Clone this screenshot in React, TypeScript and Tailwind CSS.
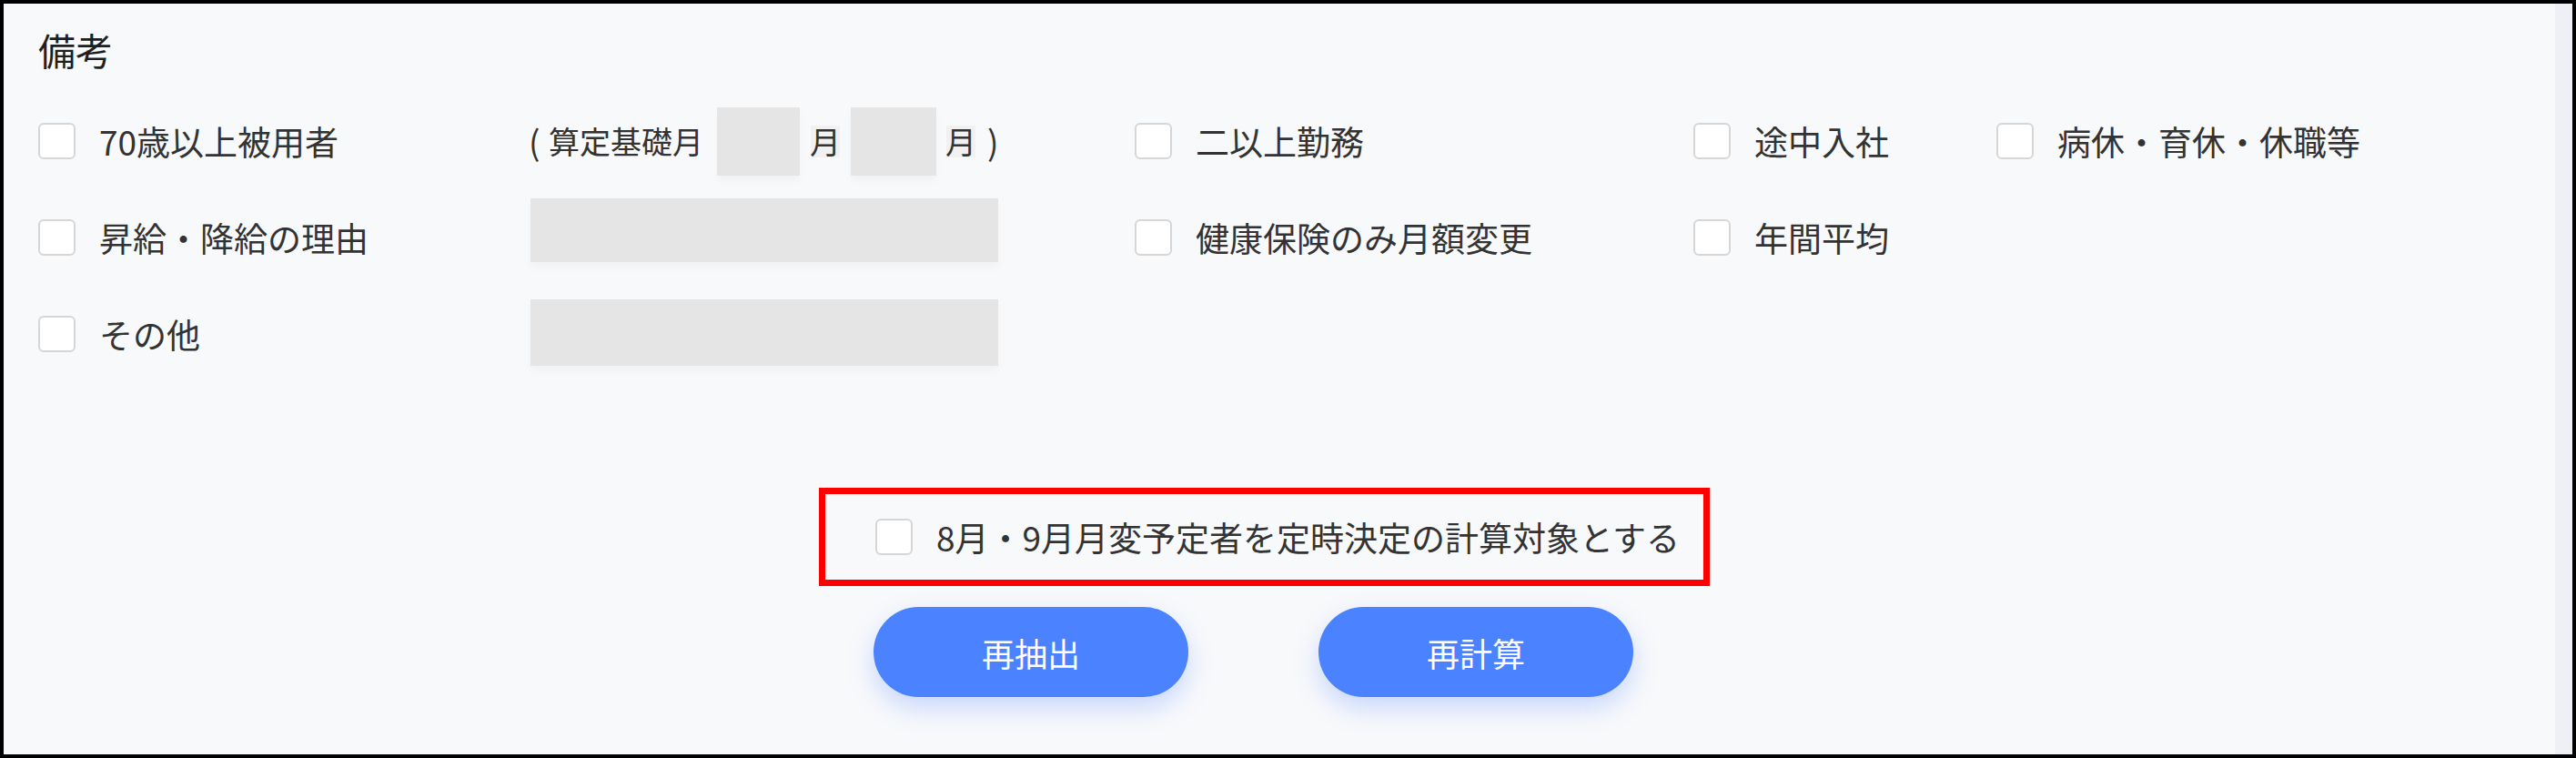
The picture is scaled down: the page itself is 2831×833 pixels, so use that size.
import React from 'react';

const font = { fontFamily: '"Noto Sans CJK JP", "Noto Sans", sans-serif' };

const Box: React.FC = () => (
  <span className="block w-[41px] h-[40px] shrink-0 rounded-[6px] border-2 border-[#d6d6d6] bg-white" />
);

const Check: React.FC<{ label: string }> = ({ label }) => (
  <label className="flex items-center gap-[26px] text-[37px] leading-none text-[#333333] whitespace-nowrap">
    <Box />
    <span>{label}</span>
  </label>
);

const App: React.FC = () => {
  return (
    <div style={font} className="w-[2831px] h-[833px] border-4 border-black bg-[#f8f9fb] flex overflow-hidden">
      <div className="flex-1 pl-[38px] pt-[30px]">
        <h2 className="text-[41px] leading-none h-[41px] font-normal text-[#1f1f1f]">備考</h2>

        <div className="mt-[27px] grid grid-cols-[541px_664px_614px_333px_1fr] auto-rows-[106px] items-center">
          {/* row 1 */}
          <Check label="70歳以上被用者" />
          <div className="flex items-center text-[#333333] leading-none whitespace-nowrap">
            <span className="text-[37px] w-[22px] -ml-[2px]">(</span>
            <span className="text-[34px]">算定基礎月</span>
            <span className="ml-[15px] block w-[91px] h-[75px] bg-[#e5e5e5] shadow-[0_6px_8px_rgba(0,0,0,0.03)]" />
            <span className="ml-[12px] flex items-center justify-center w-[32px] h-[35px] bg-[#f1f1f1] text-[34px]">月</span>
            <span className="ml-[12px] block w-[94px] h-[75px] bg-[#e5e5e5] shadow-[0_6px_8px_rgba(0,0,0,0.03)]" />
            <span className="ml-[11px] flex items-center justify-center w-[32px] h-[35px] bg-[#f1f1f1] text-[34px]">月</span>
            <span className="ml-[13px] text-[37px]">)</span>
          </div>
          <Check label="二以上勤務" />
          <Check label="途中入社" />
          <Check label="病休・育休・休職等" />

          {/* row 2 */}
          <Check label="昇給・降給の理由" />
          <div className="-mt-[16px] w-[514px] h-[70px] bg-[#e5e5e5] shadow-[0_6px_8px_rgba(0,0,0,0.03)]" />
          <Check label="健康保険のみ月額変更" />
          <Check label="年間平均" />
          <div />

          {/* row 3 */}
          <Check label="その他" />
          <div className="-mt-[3px] w-[514px] h-[73px] bg-[#e5e5e5] shadow-[0_6px_8px_rgba(0,0,0,0.03)]" />
          <div />
          <div />
          <div />
        </div>

        <div className="mt-[116px] ml-[858px] w-[979px] h-[108px] border-[7px] border-[#ff0000] flex items-center pl-[55px]">
          <Check label="8月・9月月変予定者を定時決定の計算対象とする" />
        </div>

        <div className="mt-[23px] ml-[918px] flex gap-[143px]">
          <button className="w-[346px] h-[99px] rounded-full bg-[#4b82ff] text-white text-[36px] leading-none shadow-[0_12px_28px_rgba(75,130,255,0.28)]">
            再抽出
          </button>
          <button className="w-[346px] h-[99px] rounded-full bg-[#4b82ff] text-white text-[36px] leading-none shadow-[0_12px_28px_rgba(75,130,255,0.28)]">
            再計算
          </button>
        </div>
      </div>
      <div className="w-[19px] h-full bg-[#eef0f5]" />
    </div>
  );
};

export default App;
